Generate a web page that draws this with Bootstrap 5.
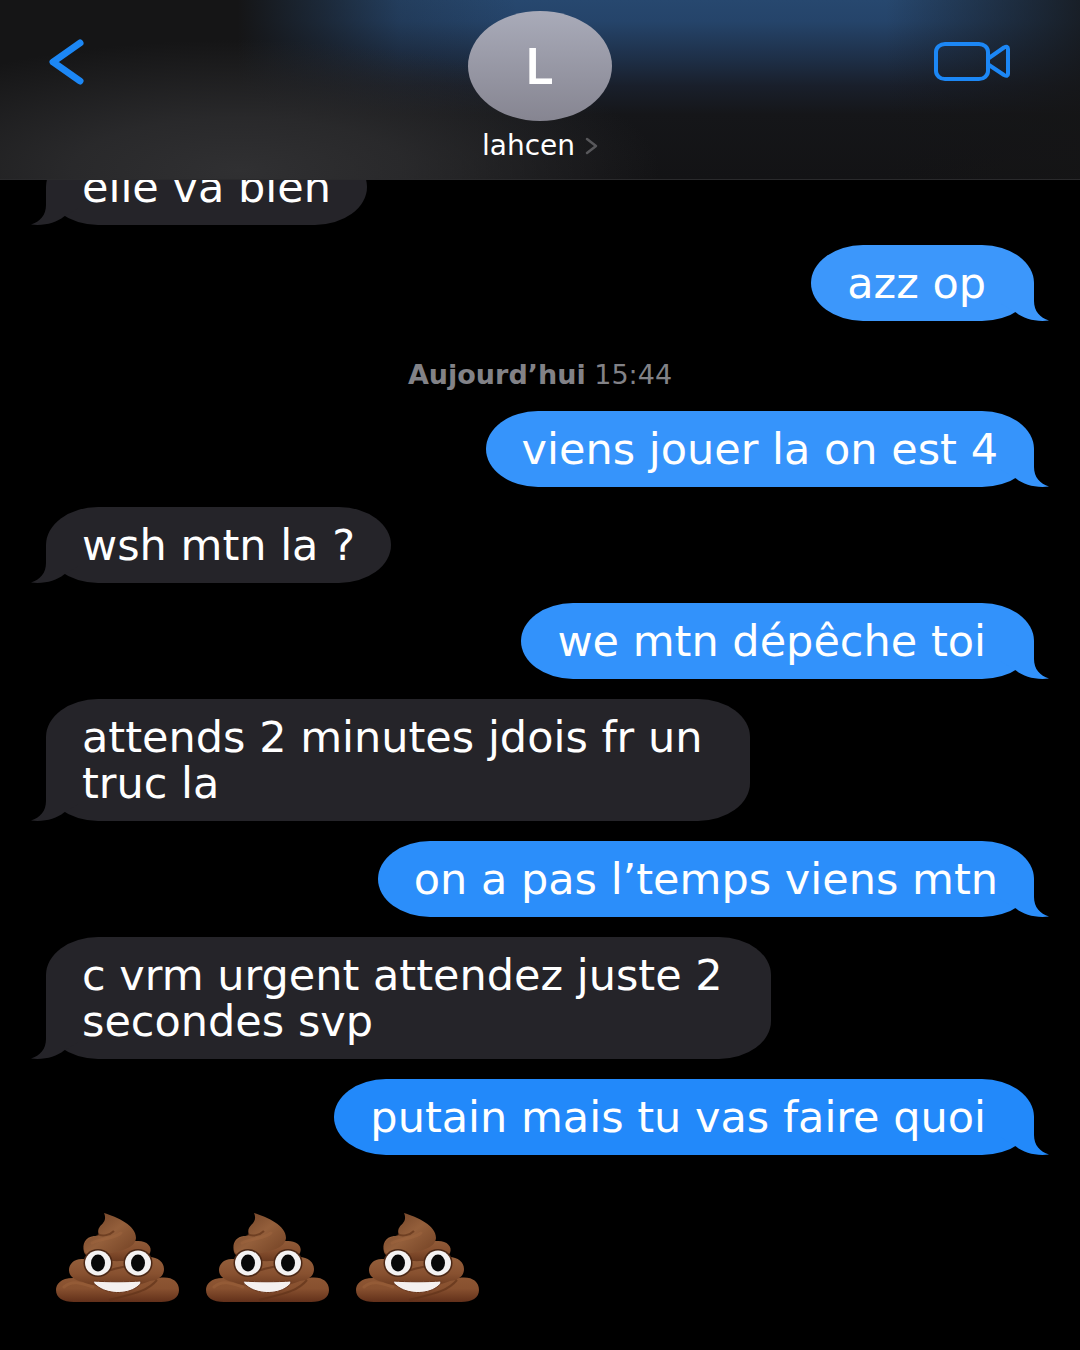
<!DOCTYPE html>
<html lang="fr">
<head>
<meta charset="utf-8">
<meta name="viewport" content="width=device-width, initial-scale=1">
<title>lahcen</title>
<link href="https://cdn.jsdelivr.net/npm/bootstrap@5.3.0/dist/css/bootstrap.min.css" rel="stylesheet">
<style>
  body { background: #000; color: #fff; font-family: "DejaVu Sans", sans-serif; }
  .topbar {
    height: 180px;
    padding: 11px 70px 0 48px;
    border-bottom: 1px solid #2a2a2c;
    background:
      radial-gradient(ellipse 420px 130px at 240px 170px, #303032 0%, rgba(46,46,48,.8) 40%, rgba(40,40,42,0) 100%),
      linear-gradient(90deg, #151516 22%, rgba(21,21,22,.6) 30%, rgba(21,21,22,.2) 37%, rgba(21,21,22,0) 48%, rgba(21,21,22,0) 82%, rgba(21,21,22,.8) 100%),
      linear-gradient(#27486f 0, #25446a 12%, #1e3049 32%, #191f2b 48%, #151619 64%, #131315 100%);
    z-index: 2;
  }
  .side-slot { flex: 1 1 0; }
  .tool-btn { color: #1c87f5; line-height: 0; }
  .video-slot { padding-top: 30px; }
  .back-slot { padding-top: 27px; }
  .contact { color: #fff; margin-left: 22px; }
  .avatar {
    width: 144px; height: 110px; border-radius: 50%;
    background: linear-gradient(#a9abb9, #868591);
    font: 600 50px/1 Inter, sans-serif;
  }
  .contact-name { font-size: 28px; line-height: 32px; margin-top: 9px; gap: 10px; }
  .thread { padding: 0 46px; gap: 20px; margin-top: -31px; }
  .bubble {
    padding: 15px 36px;
    border-radius: 52px / 38px;
    font-size: 43px; line-height: 46px;
    background: var(--tone);
    color: #fff;
    max-width: 100%;
  }
  .bubble.incoming { --tone: #252429; }
  .bubble.roomy { padding-right: 48px; }
  .tail { position: absolute; bottom: 0; color: var(--tone); }
  .outgoing .tail { right: -15px; }
  .incoming .tail { left: -15px; }
  .tone-a { --tone: #3c97fb; }
  .tone-b { --tone: #3694fb; }
  .tone-c { --tone: #3292fb; }
  .tone-d { --tone: #2b8efa; }
  .tone-e { --tone: #2289fa; }
  .stamp { color: #828287; font-size: 27px; line-height: 28px; margin: 20px 0 2px; }
  .emoji-row { gap: 27px; padding: 38px 10px 44px; }
</style>
<script src="https://cdn.jsdelivr.net/npm/bootstrap@5.3.0/dist/js/bootstrap.bundle.min.js"></script>
</head>
<body>
<svg width="0" height="0" class="position-absolute" aria-hidden="true">
  <defs>
    <linearGradient id="g1" x1="0" y1="0" x2="0" y2="1"><stop offset="0" stop-color="#95603c"/><stop offset=".55" stop-color="#885130"/><stop offset="1" stop-color="#6b3a1f"/></linearGradient>
    <linearGradient id="g2" x1="0" y1="0" x2="0" y2="1"><stop offset="0" stop-color="#935b36"/><stop offset=".6" stop-color="#87502f"/><stop offset="1" stop-color="#62301a"/></linearGradient>
    <linearGradient id="g3" x1="0" y1="0" x2="1" y2="1"><stop offset="0" stop-color="#6b3e24"/><stop offset=".5" stop-color="#945f3b"/><stop offset="1" stop-color="#714023"/></linearGradient>
    <symbol id="tail-r" viewBox="0 0 49 38"><path fill="currentColor" d="M34 0V18C34 28 40 35 49 37.500C36 39 24 36 16 29.500L0 20V0Z"/></symbol>
    <symbol id="tail-l" viewBox="0 0 49 38"><path fill="currentColor" d="M15 0V18C15 28 9 35 0 37.500C13 39 25 36 33 29.500L49 20V0Z"/></symbol>
    <symbol id="poo" viewBox="0 0 123 90">
      <path fill="url(#g2)" d="M20 65C5 64 0 71 0 77C0 85 7 89 18 89H105C116 89 123 85 123 77C123 68 115 63 103 65L62 56Z"/>
      <path fill="url(#g1)" d="M28 46C18 45 13 51 13 57C13 63 18 67 27 69C43 76 75 76 94 68C104 67 108 62 108 56C108 49 102 44 93 44Z"/>
      <path fill="url(#g1)" d="M38 23C29 24 26 31 28 39C31 51 88 51 94 40C97 33 90 27 80 28Z"/>
      <path fill="url(#g3)" d="M48 0C61 4 80 12 80 25C79 36 62 39 44 42C34 44 28 41 28 35C28 27 35 24 43 22C39 11 53 12 48 0Z"/>
      <path fill="none" stroke="#613319" stroke-width="2" opacity=".7" d="M42 21C46 24 54 22 58 18M52 58C65 53 80 53 92 46M53 87C76 81 91 79 101 67"/>
      <path fill="none" stroke="#a66b43" stroke-width="3" stroke-linecap="round" opacity=".35" d="M36 30C45 25 58 26 65 20M8 74C16 67 25 70 37 74"/>
      <ellipse cx="42" cy="50" rx="14.500" ry="14" fill="#4c2815"/><ellipse cx="82" cy="50" rx="14.500" ry="14" fill="#4c2815"/>
      <ellipse cx="42" cy="50" rx="13" ry="12.500" fill="#f4f2f2"/><ellipse cx="82" cy="50" rx="13" ry="12.500" fill="#f4f2f2"/>
      <ellipse cx="42" cy="50" rx="7" ry="8.500" fill="#080808"/><ellipse cx="82" cy="50" rx="7" ry="8.500" fill="#080808"/>
      <path d="M38 68C49 69 73 69 84 68C86 69 84 72 81 74C70 82 51 81 41 73C38 71 37 69 38 68Z" fill="#f4f0ef" stroke="#69351a" stroke-width="1"/>
    </symbol>
  </defs>
</svg>

<header class="topbar position-relative d-flex align-items-start">
  <div class="side-slot back-slot">
    <button type="button" class="tool-btn btn border-0 p-0" aria-label="Retour">
      <svg width="36" height="48" viewBox="0 0 36 48"><path d="M32 5L5 24L32 43" fill="none" stroke="currentColor" stroke-width="7" stroke-linecap="round" stroke-linejoin="round"/></svg>
    </button>
  </div>
  <a href="#" class="contact d-flex flex-column align-items-center text-decoration-none">
    <span class="avatar d-flex align-items-center justify-content-center">L</span>
    <span class="contact-name d-flex align-items-center">lahcen
      <svg width="13" height="18" viewBox="0 0 13 18"><path d="M2 2L11 9L2 16" fill="none" stroke="#58585b" stroke-width="2.500" stroke-linecap="round" stroke-linejoin="round"/></svg>
    </span>
  </a>
  <div class="side-slot video-slot text-end">
    <button type="button" class="tool-btn btn border-0 p-0" aria-label="Appel vidéo">
      <svg width="77" height="41" viewBox="0 0 77 41"><g fill="none" stroke="currentColor" stroke-width="4" stroke-linejoin="round"><rect x="3" y="3" width="52" height="35" rx="9" ry="8"/><path d="M56 17L71 6.500Q75 4.500 75 8V33Q75 36 71 34L56 24"/></g></svg>
    </button>
  </div>
</header>

<main class="thread d-flex flex-column">
  <div class="bubble incoming position-relative align-self-start">elle va bien<svg class="tail" width="49" height="38"><use href="#tail-l"/></svg></div>
  <div class="bubble outgoing roomy tone-a position-relative align-self-end">azz op<svg class="tail" width="49" height="38"><use href="#tail-r"/></svg></div>
  <div class="stamp text-center"><b>Aujourd’hui</b> 15:44</div>
  <div class="bubble outgoing tone-b position-relative align-self-end">viens jouer la on est 4<svg class="tail" width="49" height="38"><use href="#tail-r"/></svg></div>
  <div class="bubble incoming position-relative align-self-start">wsh mtn la ?<svg class="tail" width="49" height="38"><use href="#tail-l"/></svg></div>
  <div class="bubble outgoing roomy tone-c position-relative align-self-end">we mtn dépêche toi<svg class="tail" width="49" height="38"><use href="#tail-r"/></svg></div>
  <div class="bubble incoming roomy position-relative align-self-start">attends 2 minutes jdois fr un<br>truc la<svg class="tail" width="49" height="38"><use href="#tail-l"/></svg></div>
  <div class="bubble outgoing tone-d position-relative align-self-end">on a pas l’temps viens mtn<svg class="tail" width="49" height="38"><use href="#tail-r"/></svg></div>
  <div class="bubble incoming roomy position-relative align-self-start">c vrm urgent attendez juste 2<br>secondes svp<svg class="tail" width="49" height="38"><use href="#tail-l"/></svg></div>
  <div class="bubble outgoing roomy tone-e position-relative align-self-end">putain mais tu vas faire quoi<svg class="tail" width="49" height="38"><use href="#tail-r"/></svg></div>
  <div class="emoji-row d-flex" role="img" aria-label="Trois emojis crotte souriante">
    <svg width="123" height="90"><use href="#poo"/></svg>
    <svg width="123" height="90"><use href="#poo"/></svg>
    <svg width="123" height="90"><use href="#poo"/></svg>
  </div>
</main>
</body>
</html>
